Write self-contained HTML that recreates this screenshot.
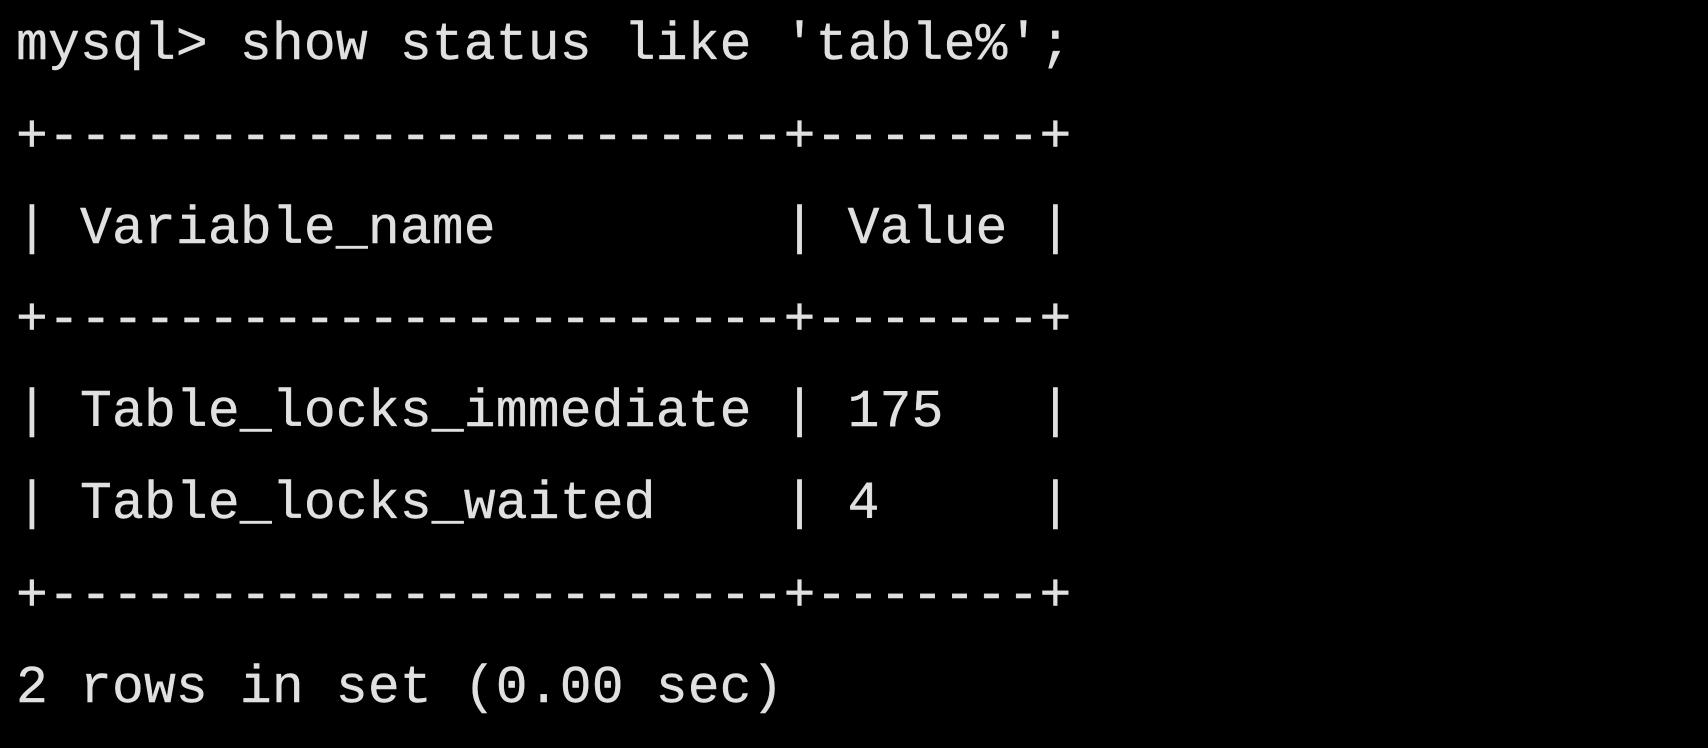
<!DOCTYPE html>
<html><head><meta charset="utf-8"><style>
html,body{margin:0;padding:0;background:#000;width:1708px;height:748px;overflow:hidden}
pre{position:absolute;left:16px;top:0px;margin:0;font-family:"Liberation Mono","DejaVu Sans Mono",monospace;font-size:53px;line-height:91.8px;color:#e0e0e0;letter-spacing:0.18px;-webkit-text-stroke:0.4px #e0e0e0}
</style></head><body>
<pre>mysql&gt; show status like 'table%';
+-----------------------+-------+
| Variable_name         | Value |
+-----------------------+-------+
| Table_locks_immediate | 175   |
| Table_locks_waited    | 4     |
+-----------------------+-------+
2 rows in set (0.00 sec)</pre>
</body></html>
